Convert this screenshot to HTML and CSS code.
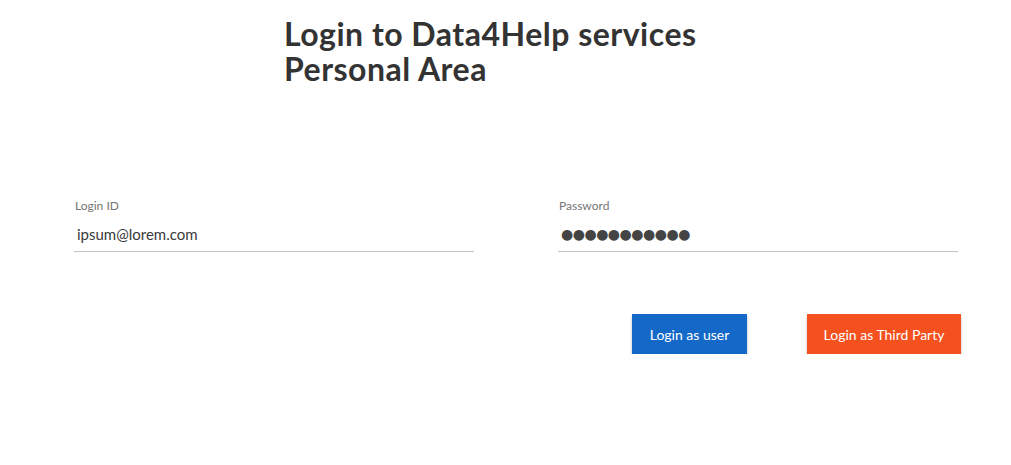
FILE: index.html
```html
<!DOCTYPE html>
<html>
<head>
<meta charset="utf-8">
<link rel="stylesheet" href="styles.css">
</head>
<body>
<div class="page">
  <h1 class="title"><span class="title-line">Login to Data4Help services</span><span class="title-line">Personal Area</span></h1>
  <div class="fields">
    <div class="field">
      <label class="label">Login ID</label>
      <div class="value">ipsum@lorem.com</div>
    </div>
    <div class="field">
      <label class="label">Password</label>
      <div class="value dots">●●●●●●●●●●●</div>
    </div>
  </div>
  <div class="actions">
    <button class="btn btn-user">Login as user</button>
    <button class="btn btn-third">Login as Third Party</button>
  </div>
</div>
</body>
</html>
```
FILE: styles.css
```css
html, body {
  margin: 0;
  padding: 0;
  background: #ffffff;
}
body {
  font-family: Lato, "Open Sans", sans-serif;
  color: #333333;
}
.page {
  width: 1011px;
}
.title {
  margin: 0;
  padding: 16px 0 0 284px;
  font-size: 32px;
  font-weight: 700;
  color: #333333;
  letter-spacing: 0.5px;
  display: flex;
  flex-direction: column;
  align-items: flex-start;
}
.title-line {
  display: block;
  height: 35px;
  line-height: 35px;
}
.fields {
  display: flex;
  gap: 84px;
  padding: 112px 0 0 74px;
}
.field {
  width: 400px;
  display: flex;
  flex-direction: column;
  border-bottom: 1px solid #c4c4c4;
}
.label {
  font-size: 12px;
  line-height: 16px;
  color: #757575;
  padding-left: 1px;
}
.value {
  font-size: 15px;
  line-height: 20px;
  padding: 10px 0 7px 3px;
  color: #3a3a3a;
}
.dots {
  font-family: "DejaVu Sans", sans-serif;
  font-size: 14px;
  letter-spacing: -0.5px;
  color: #444444;
}
.actions {
  display: flex;
  justify-content: flex-end;
  gap: 60px;
  padding: 62px 50px 0 0;
}
.btn {
  height: 40px;
  border: none;
  border-radius: 0;
  color: #ffffff;
  font-family: Lato, "Open Sans", sans-serif;
  font-size: 14px;
  padding: 0 16px;
  box-shadow: 0 2px 3px rgba(0, 0, 0, 0.25);
}
.btn-user {
  background: #1368c8;
  width: 115px;
}
.btn-third {
  background: #f4511e;
  width: 154px;
}
```
